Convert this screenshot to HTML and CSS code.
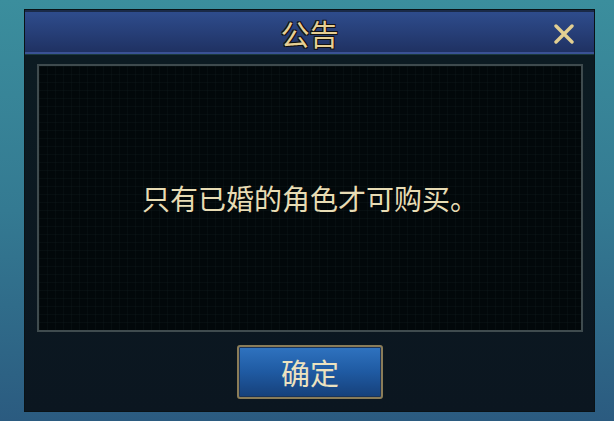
FILE: index.html
```html
<!DOCTYPE html>
<html>

<head>
    <title>公告</title>
    <link rel="stylesheet" href="styles.css">
</head>

<body>
    <div class="dialog">
        <div class="title-bar">
            <span class="title">公告</span>
            <svg class="close" width="22" height="20" viewBox="0 0 22 20">
                <path d="M3 2 L19 18 M19 2 L3 18" stroke="#e2cf92" stroke-width="3.4" stroke-linecap="round" fill="none"/>
            </svg>
        </div>
        <div class="content">
            <div class="message-box">
                <p class="message">只有已婚的角色才可购买。</p>
            </div>
            <div class="actions">
                <button class="ok-button">确定</button>
            </div>
        </div>
    </div>
</body>

</html>
```

FILE: styles.css
```css
body {
    margin: 0;
    width: 614px;
    height: 421px;
    overflow: hidden;
    background: linear-gradient(180deg, #3b8e9d 0%, #347a92 50%, #2b5b80 100%);
    font-family: "Noto Sans CJK SC", sans-serif;
}

.dialog {
    margin: 9px 0 0 24px;
    width: 571px;
    height: 403px;
    box-sizing: border-box;
    display: flex;
    flex-direction: column;
    background: #0c1820;
    border: 1px solid #0a1216;
    box-shadow: inset 0 0 0 2px #0f1a20, inset 0 0 0 3px #3d4a4e;
}

.title-bar {
    height: 44px;
    flex-shrink: 0;
    position: relative;
    display: flex;
    align-items: center;
    justify-content: center;
    background: linear-gradient(180deg, #2e4c8c 0%, #273f78 50%, #1f3162 100%);
    border-top: 2px solid #1a2a48;
    border-bottom: 2px solid #3a5294;
    box-sizing: border-box;
}

.title {
    font-size: 29px;
    line-height: 1;
    margin-top: 2px;
    color: #e6cf94;
    text-shadow: -1px -1px 0 #111, 1px -1px 0 #111, -1px 1px 0 #111, 1px 1px 0 #111;
}

.close {
    position: absolute;
    right: 19px;
    top: 12px;
}

.content {
    flex: 1;
    display: flex;
    flex-direction: column;
    padding: 9px 11px 0 12px;
    background: linear-gradient(180deg, #0c1b22 0%, #0b1620 100%);
    border-top: 1px solid #1b3a3e;
}

.message-box {
    height: 268px;
    box-sizing: border-box;
    display: flex;
    align-items: center;
    justify-content: center;
    background-color: #02080a;
    background-image:
        linear-gradient(rgba(40, 60, 60, 0.12) 1px, transparent 1px),
        linear-gradient(90deg, rgba(40, 60, 60, 0.12) 1px, transparent 1px);
    background-size: 8px 8px;
    border: 2px solid #3f4b4e;
}

.message {
    margin: 0;
    font-size: 28px;
    color: #e8dcb4;
    letter-spacing: 0;
}

.actions {
    display: flex;
    justify-content: center;
    padding-top: 13px;
}

.ok-button {
    width: 146px;
    height: 54px;
    font-family: "Noto Sans CJK SC", sans-serif;
    font-size: 29px;
    color: #ece2c0;
    background: linear-gradient(180deg, #2f73c0 0%, #1f5aa2 50%, #16407a 100%);
    border: 2px solid #8a7c58;
    border-radius: 3px;
    box-shadow: inset 0 0 0 1px #1a3358;
    padding: 0;
}
```
